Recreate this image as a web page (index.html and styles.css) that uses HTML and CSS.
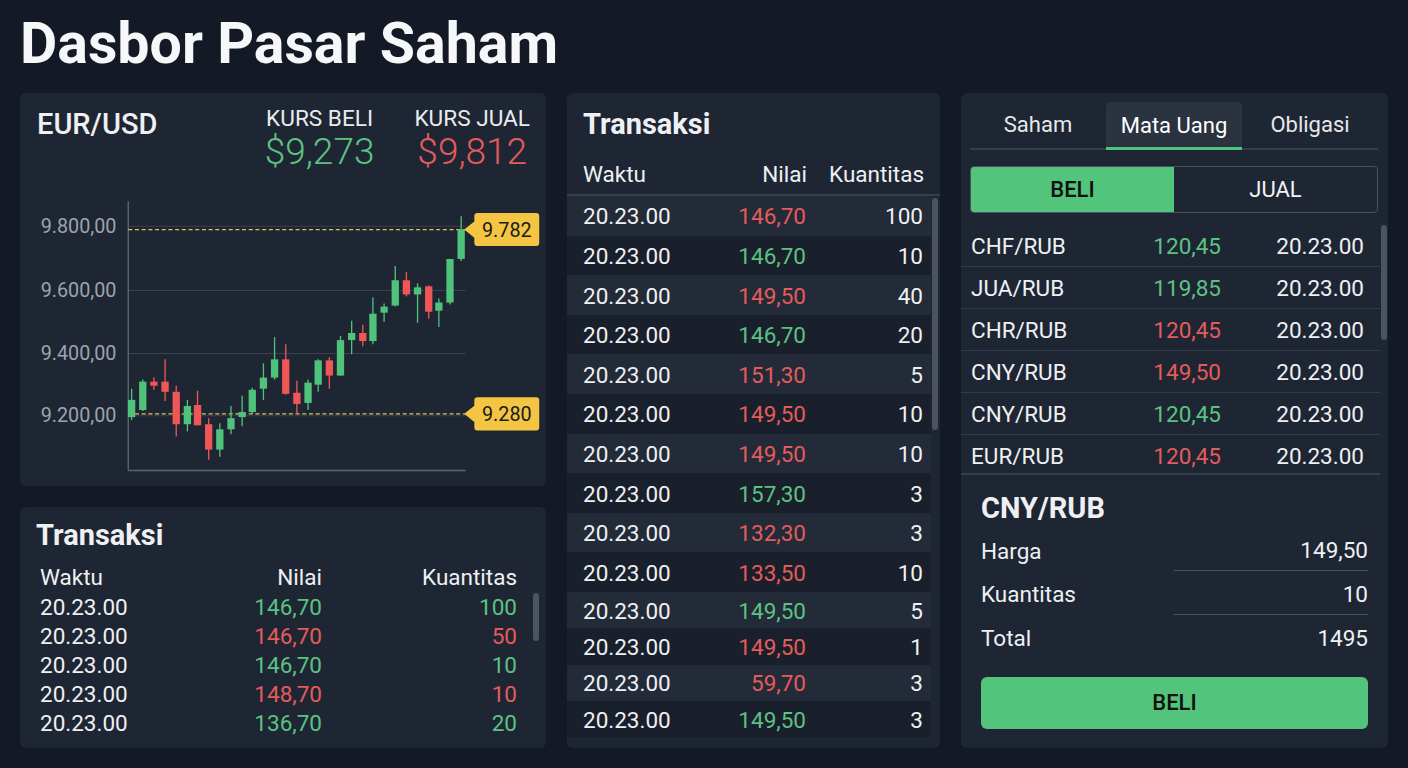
FILE: index.html
```html
<!DOCTYPE html>
<html lang="id">
<head>
    <meta charset="UTF-8">
    <meta name="viewport" content="width=device-width, initial-scale=1.0">
    <title>Dasbor Pasar Saham</title>
    <link rel="stylesheet" href="styles.css">
</head>
<body>

    <header>
        <h1>Dasbor Pasar Saham</h1>
    </header>

    <main class="board">

        <div class="left-col">

            <!-- Quote + candle chart -->
            <section class="panel quote-panel">
                <div class="quote-head">
                    <h2 class="pair">EUR/USD</h2>
                    <div class="rates">
                        <div class="rate">
                            <span class="rate-label">KURS BELI</span>
                            <span class="rate-value up">$9,273</span>
                        </div>
                        <div class="rate">
                            <span class="rate-label">KURS JUAL</span>
                            <span class="rate-value down">$9,812</span>
                        </div>
                    </div>
                </div>

                <svg class="chart" width="526" height="290" viewBox="0 0 518.6 286">
                    <g class="grid">
                        <line x1="106.7" y1="35.7" x2="439.3" y2="35.7"/>
                        <line x1="106.7" y1="99" x2="439.3" y2="99"/>
                        <line x1="106.7" y1="161.3" x2="439.3" y2="161.3"/>
                        <line x1="106.7" y1="222.7" x2="439.3" y2="222.7"/>
                    </g>
                    <g class="axis">
                        <line x1="106.7" y1="11" x2="106.7" y2="276.7"/>
                        <line x1="106.7" y1="276.7" x2="439.3" y2="276.7"/>
                    </g>
                    <g class="axis-labels">
                        <text x="95" y="35.7">9.800,00</text>
                        <text x="95" y="99">9.600,00</text>
                        <text x="95" y="161.3">9.400,00</text>
                        <text x="95" y="222.7">9.200,00</text>
                    </g>
                    <g class="level">
                        <line x1="106.7" y1="39" x2="440" y2="39"/>
                        <line x1="106.7" y1="220.7" x2="440" y2="220.7"/>
                    </g>

                    <!-- candles: wick line + body rect -->
                    <g class="c up"><line x1="110" y1="196" x2="110" y2="227"/><rect x="106.4" y="207" width="7.2" height="17"/></g>
                    <g class="c up"><line x1="121" y1="187" x2="121" y2="218"/><rect x="117.4" y="189" width="7.2" height="28"/></g>
                    <g class="c down"><line x1="132" y1="185" x2="132" y2="197"/><rect x="128.4" y="189" width="7.2" height="4"/></g>
                    <g class="c down"><line x1="143" y1="167" x2="143" y2="208"/><rect x="139.4" y="189" width="7.2" height="10"/></g>
                    <g class="c down"><line x1="154" y1="193" x2="154" y2="243"/><rect x="150.4" y="199" width="7.2" height="32"/></g>
                    <g class="c up"><line x1="165" y1="207" x2="165" y2="238"/><rect x="161.4" y="213" width="7.2" height="18"/></g>
                    <g class="c down"><line x1="175" y1="198" x2="175" y2="232"/><rect x="171.4" y="212" width="7.2" height="20"/></g>
                    <g class="c down"><line x1="186" y1="225" x2="186" y2="266"/><rect x="182.4" y="231" width="7.2" height="25"/></g>
                    <g class="c up"><line x1="197" y1="230" x2="197" y2="263"/><rect x="193.4" y="236" width="7.2" height="20"/></g>
                    <g class="c up"><line x1="208" y1="213" x2="208" y2="241"/><rect x="204.4" y="225" width="7.2" height="11"/></g>
                    <g class="c up"><line x1="219" y1="203" x2="219" y2="233"/><rect x="215.4" y="219" width="7.2" height="5"/></g>
                    <g class="c up"><line x1="229" y1="195" x2="229" y2="221"/><rect x="225.4" y="197" width="7.2" height="22"/></g>
                    <g class="c up"><line x1="240" y1="171" x2="240" y2="207"/><rect x="236.4" y="185" width="7.2" height="11"/></g>
                    <g class="c up"><line x1="251" y1="145" x2="251" y2="187"/><rect x="247.4" y="167" width="7.2" height="18"/></g>
                    <g class="c down"><line x1="262" y1="152" x2="262" y2="202"/><rect x="258.4" y="167" width="7.2" height="34"/></g>
                    <g class="c down"><line x1="273" y1="188" x2="273" y2="221"/><rect x="269.4" y="200" width="7.2" height="11"/></g>
                    <g class="c up"><line x1="284" y1="187" x2="284" y2="217"/><rect x="280.4" y="190" width="7.2" height="20"/></g>
                    <g class="c up"><line x1="294" y1="167" x2="294" y2="199"/><rect x="290.4" y="168" width="7.2" height="24"/></g>
                    <g class="c down"><line x1="305" y1="165" x2="305" y2="196"/><rect x="301.4" y="168" width="7.2" height="15"/></g>
                    <g class="c up"><line x1="316" y1="144" x2="316" y2="183"/><rect x="312.4" y="148" width="7.2" height="35"/></g>
                    <g class="c up"><line x1="327" y1="129" x2="327" y2="162"/><rect x="323.4" y="141" width="7.2" height="7"/></g>
                    <g class="c down"><line x1="338" y1="133" x2="338" y2="154"/><rect x="334.4" y="141" width="7.2" height="8"/></g>
                    <g class="c up"><line x1="348" y1="106" x2="348" y2="152"/><rect x="344.4" y="122" width="7.2" height="27"/></g>
                    <g class="c up"><line x1="359" y1="112" x2="359" y2="130"/><rect x="355.4" y="115" width="7.2" height="6"/></g>
                    <g class="c up"><line x1="370" y1="75" x2="370" y2="115"/><rect x="366.4" y="89" width="7.2" height="25"/></g>
                    <g class="c down"><line x1="381" y1="81" x2="381" y2="105"/><rect x="377.4" y="89" width="7.2" height="14"/></g>
                    <g class="c up"><line x1="392" y1="92" x2="392" y2="131"/><rect x="388.4" y="96" width="7.2" height="7"/></g>
                    <g class="c down"><line x1="403" y1="94" x2="403" y2="127"/><rect x="399.4" y="95" width="7.2" height="25"/></g>
                    <g class="c up"><line x1="413" y1="107" x2="413" y2="135"/><rect x="409.4" y="111" width="7.2" height="8"/></g>
                    <g class="c up"><line x1="424" y1="68" x2="424" y2="113"/><rect x="420.4" y="68" width="7.2" height="43"/></g>
                    <g class="c up"><line x1="435" y1="26" x2="435" y2="70"/><rect x="431.4" y="39" width="7.2" height="29"/></g>

                    <!-- price tags on the right edge -->
                    <g class="tag">
                        <path d="M438 39 L448 31 V25.7 Q448 22.7 451 22.7 H509 Q512 22.7 512 25.7 V52.3 Q512 55.3 509 55.3 H451 Q448 55.3 448 52.3 V47 Z"/>
                        <text x="480" y="39.5">9.782</text>
                    </g>
                    <g class="tag">
                        <path d="M438 220.7 L448 212.7 V207.3 Q448 204.3 451 204.3 H509 Q512 204.3 512 207.3 V234.3 Q512 237.3 509 237.3 H451 Q448 237.3 448 234.3 V228.7 Z"/>
                        <text x="480" y="221.2">9.280</text>
                    </g>
                </svg>
            </section>

            <!-- Short trade list -->
            <section class="panel mini-panel">
                <h2 class="panel-title">Transaksi</h2>
                <div class="mini-head">
                    <span>Waktu</span>
                    <span class="num">Nilai</span>
                    <span class="num">Kuantitas</span>
                </div>
                <div class="mini-body">
                    <div class="mini-rows">
                        <div class="mini-row"><span>20.23.00</span><span class="num up">146,70</span><span class="num up">100</span></div>
                        <div class="mini-row"><span>20.23.00</span><span class="num down">146,70</span><span class="num down">50</span></div>
                        <div class="mini-row"><span>20.23.00</span><span class="num up">146,70</span><span class="num up">10</span></div>
                        <div class="mini-row"><span>20.23.00</span><span class="num down">148,70</span><span class="num down">10</span></div>
                        <div class="mini-row"><span>20.23.00</span><span class="num up">136,70</span><span class="num up">20</span></div>
                    </div>
                    <div class="track"><div class="thumb mini-thumb"></div></div>
                </div>
            </section>

        </div>

        <!-- Full trade list -->
        <section class="panel trades-panel">
            <h2 class="panel-title">Transaksi</h2>
            <div class="trades-head">
                <span>Waktu</span>
                <span class="num">Nilai</span>
                <span class="num">Kuantitas</span>
            </div>
            <div class="trades-body">
                <div class="trades-rows">
                    <div class="trade-row"><span>20.23.00</span><span class="num down">146,70</span><span class="num">100</span></div>
                    <div class="trade-row"><span>20.23.00</span><span class="num up">146,70</span><span class="num">10</span></div>
                    <div class="trade-row"><span>20.23.00</span><span class="num down">149,50</span><span class="num">40</span></div>
                    <div class="trade-row"><span>20.23.00</span><span class="num up">146,70</span><span class="num">20</span></div>
                    <div class="trade-row"><span>20.23.00</span><span class="num down">151,30</span><span class="num">5</span></div>
                    <div class="trade-row"><span>20.23.00</span><span class="num down">149,50</span><span class="num">10</span></div>
                    <div class="trade-row"><span>20.23.00</span><span class="num down">149,50</span><span class="num">10</span></div>
                    <div class="trade-row"><span>20.23.00</span><span class="num up">157,30</span><span class="num">3</span></div>
                    <div class="trade-row"><span>20.23.00</span><span class="num down">132,30</span><span class="num">3</span></div>
                    <div class="trade-row"><span>20.23.00</span><span class="num down">133,50</span><span class="num">10</span></div>
                    <div class="trade-row"><span>20.23.00</span><span class="num up">149,50</span><span class="num">5</span></div>
                    <div class="trade-row"><span>20.23.00</span><span class="num down">149,50</span><span class="num">1</span></div>
                    <div class="trade-row"><span>20.23.00</span><span class="num down">59,70</span><span class="num">3</span></div>
                    <div class="trade-row"><span>20.23.00</span><span class="num up">149,50</span><span class="num">3</span></div>
                </div>
                <div class="track"><div class="thumb trades-thumb"></div></div>
            </div>
        </section>

        <!-- Market list + order form -->
        <section class="panel market-panel">
            <nav class="tabs">
                <a class="tab">Saham</a>
                <a class="tab active">Mata Uang</a>
                <a class="tab">Obligasi</a>
            </nav>

            <div class="side-toggle">
                <button class="side active">BELI</button>
                <button class="side">JUAL</button>
            </div>

            <div class="market-body">
                <div class="market-list">
                    <div class="market-row"><span>CHF/RUB</span><span class="num up">120,45</span><span class="num">20.23.00</span></div>
                    <div class="market-row"><span>JUA/RUB</span><span class="num up">119,85</span><span class="num">20.23.00</span></div>
                    <div class="market-row"><span>CHR/RUB</span><span class="num down">120,45</span><span class="num">20.23.00</span></div>
                    <div class="market-row"><span>CNY/RUB</span><span class="num down">149,50</span><span class="num">20.23.00</span></div>
                    <div class="market-row"><span>CNY/RUB</span><span class="num up">120,45</span><span class="num">20.23.00</span></div>
                    <div class="market-row"><span>EUR/RUB</span><span class="num down">120,45</span><span class="num">20.23.00</span></div>
                </div>
                <div class="track"><div class="thumb market-thumb"></div></div>
            </div>

            <div class="order">
                <h2 class="order-title">CNY/RUB</h2>
                <div class="order-row"><span>Harga</span><span class="order-value line">149,50</span></div>
                <div class="order-row"><span>Kuantitas</span><span class="order-value line">10</span></div>
                <div class="order-row"><span>Total</span><span class="order-value">1495</span></div>
                <button class="order-btn">BELI</button>
            </div>
        </section>

    </main>

</body>
</html>
```

FILE: styles.css
```css
body {
    font-family: 'Roboto', 'Liberation Sans', sans-serif;
    background-color: #131a26;
    color: #eef0f3;
    margin: 0;
    padding: 0 20px 20px;
}
header h1 {
    font-size: 57.3px;
    font-weight: 700;
    line-height: 57px;
    margin: 0;
    padding: 14.6px 0 21.4px 0;
    color: #f6f7f9;
}
.board {
    display: grid;
    grid-template-columns: 526px 373px 427px;
    gap: 21px;
    height: 655px;
}
.left-col {
    display: grid;
    grid-template-rows: 393px 1fr;
    gap: 21px;
    min-height: 0;
}
.panel {
    background-color: #1f2633;
    border-radius: 6px;
    overflow: hidden;
}
.up { color: #5cc283; }
.down { color: #e35b5b; }
.num { text-align: right; }

/* quote header */
.quote-head {
    display: flex;
    justify-content: space-between;
    align-items: flex-start;
    padding: 13px 16px 15px 17px;
    height: 69px;
}
.pair {
    margin: 1px 0 0;
    font-size: 29px;
    font-weight: 500;
    line-height: 1.2;
}
.rates {
    display: flex;
    gap: 40px;
}
.rate {
    display: flex;
    flex-direction: column;
    align-items: center;
}
.rate-label {
    font-size: 22.6px;
    line-height: 26px;
    color: #e9ebee;
}
.rate-value {
    font-size: 37px;
    font-weight: 300;
    line-height: 40px;
}

/* candle chart */
.chart {
    display: block;
}
.chart .grid line {
    stroke: #3a414d;
    stroke-width: 1;
}
.chart .axis line {
    stroke: #5d6470;
    stroke-width: 1.4;
}
.chart .axis-labels text {
    fill: #9ca3ae;
    font-size: 19.5px;
    text-anchor: end;
    dominant-baseline: central;
}
.chart .level line {
    stroke: #e2c15e;
    stroke-width: 1.3;
    stroke-dasharray: 4 2.6;
}
.chart .c line {
    stroke-width: 1.3;
}
.chart .c.up line { stroke: #4fc27b; }
.chart .c.up rect { fill: #4fc27b; }
.chart .c.down line { stroke: #ef5757; }
.chart .c.down rect { fill: #ef5757; }
.chart .tag path {
    fill: #f4c542;
}
.chart .tag text {
    fill: #1b1b1b;
    font-size: 19.5px;
    text-anchor: middle;
    dominant-baseline: central;
}

/* shared bits */
.panel-title {
    margin: 0;
    font-size: 29px;
    font-weight: 700;
    line-height: 1.2;
}
.track {
    width: 6px;
    flex-shrink: 0;
}
.thumb {
    background-color: #4b5361;
    border-radius: 3px;
}

/* small trade list */
.mini-panel {
    padding-top: 11.3px;
}
.mini-panel .panel-title {
    padding-left: 16px;
}
.mini-head,
.mini-row {
    display: grid;
    grid-template-columns: 150px 132px 195px;
    align-items: center;
}
.mini-head {
    height: 31px;
    margin: 8px 29px 0 20px;
    font-size: 22.5px;
}
.mini-body {
    display: flex;
    gap: 16px;
    padding: 0 7px 0 20px;
}
.mini-rows {
    flex: 1;
}
.mini-row {
    height: 29px;
    font-size: 22.5px;
}
.mini-thumb {
    height: 48px;
    margin-top: 1px;
}

/* full trade list */
.trades-panel {
    padding: 14.3px 0 10px;
}
.trades-panel .panel-title {
    padding-left: 16px;
}
.trades-head,
.trade-row {
    display: grid;
    grid-template-columns: 1fr 120px 117px;
    align-items: center;
}
.trades-head {
    height: 40px;
    margin-top: 12px;
    padding: 0 16px;
    font-size: 22.5px;
    border-bottom: 2px solid #363e4b;
}
.trades-body {
    display: flex;
    gap: 1px;
}
.trades-rows {
    flex: 1;
}
.trade-row {
    height: 39.6px;
    padding: 1px 8px 0 16px;
    box-sizing: border-box;
    font-size: 22.5px;
    background-color: #232b38;
}
/* the last rows sit a little tighter to fit the panel */
.trade-row:nth-child(n+11) {
    height: 36.3px;
}
.trade-row:nth-child(even) {
    background-color: #1a202b;
}
.trades-body .track {
    width: 8px;
}
.trades-thumb {
    width: 6px;
    height: 232px;
    margin-top: 2px;
}

/* market panel */
.tabs {
    display: grid;
    grid-template-columns: repeat(3, 1fr);
    margin: 9px 10px 0 9px;
    border-bottom: 2px solid #363e4b;
}
.tab {
    height: 46px;
    display: flex;
    align-items: center;
    justify-content: center;
    font-size: 22px;
    color: #e6e8eb;
    border-radius: 4px 4px 0 0;
    cursor: pointer;
}
.tab.active {
    background-color: #2b3341;
    color: #fff;
    box-shadow: inset 0 -3px 0 #4fc27b;
    margin-bottom: -2px;
    height: 48px;
}
.side-toggle {
    display: grid;
    grid-template-columns: 1fr 1fr;
    height: 47px;
    margin: 16px 10px 0 9px;
    border: 1px solid #4a5262;
    border-radius: 4px;
    overflow: hidden;
    box-sizing: border-box;
}
.side {
    font-family: inherit;
    font-size: 22px;
    border: none;
    background: transparent;
    color: #f1f3f5;
    cursor: pointer;
}
.side.active {
    background-color: #52c47b;
    color: #111;
    font-weight: 500;
}
.market-body {
    display: flex;
    margin-top: 12px;
}
.market-list {
    flex: 1;
    height: 248px;
    overflow: hidden;
    border-bottom: 2px solid #373f4c;
}
.market-row {
    display: grid;
    grid-template-columns: 1fr 120px 143px;
    align-items: center;
    height: 42px;
    padding: 1px 16px 0 10px;
    box-sizing: border-box;
    font-size: 22.5px;
    border-bottom: 1px solid #343c49;
}
.market-body .track {
    width: 8px;
}
.market-thumb {
    width: 6px;
    height: 115px;
    margin: 0 0 0 1px;
}

/* order form */
.order {
    padding: 16px 20px 0;
}
.order-title {
    margin: 0 0 2px;
    font-size: 29px;
    font-weight: 700;
    line-height: 1.2;
}
.order-row {
    display: grid;
    grid-template-columns: 1fr 194px;
    align-items: stretch;
    height: 43.5px;
    font-size: 22.5px;
}
.order-row span {
    display: flex;
    align-items: center;
    padding-top: 2px;
}
.order-value {
    justify-content: flex-end;
}
.order-value.line {
    border-bottom: 1px solid #4a5262;
}
.order-btn {
    display: block;
    width: 100%;
    height: 52px;
    margin-top: 18.5px;
    font-family: inherit;
    font-size: 22px;
    font-weight: 500;
    color: #111;
    background-color: #52c47b;
    border: none;
    border-radius: 6px;
    cursor: pointer;
}
```
